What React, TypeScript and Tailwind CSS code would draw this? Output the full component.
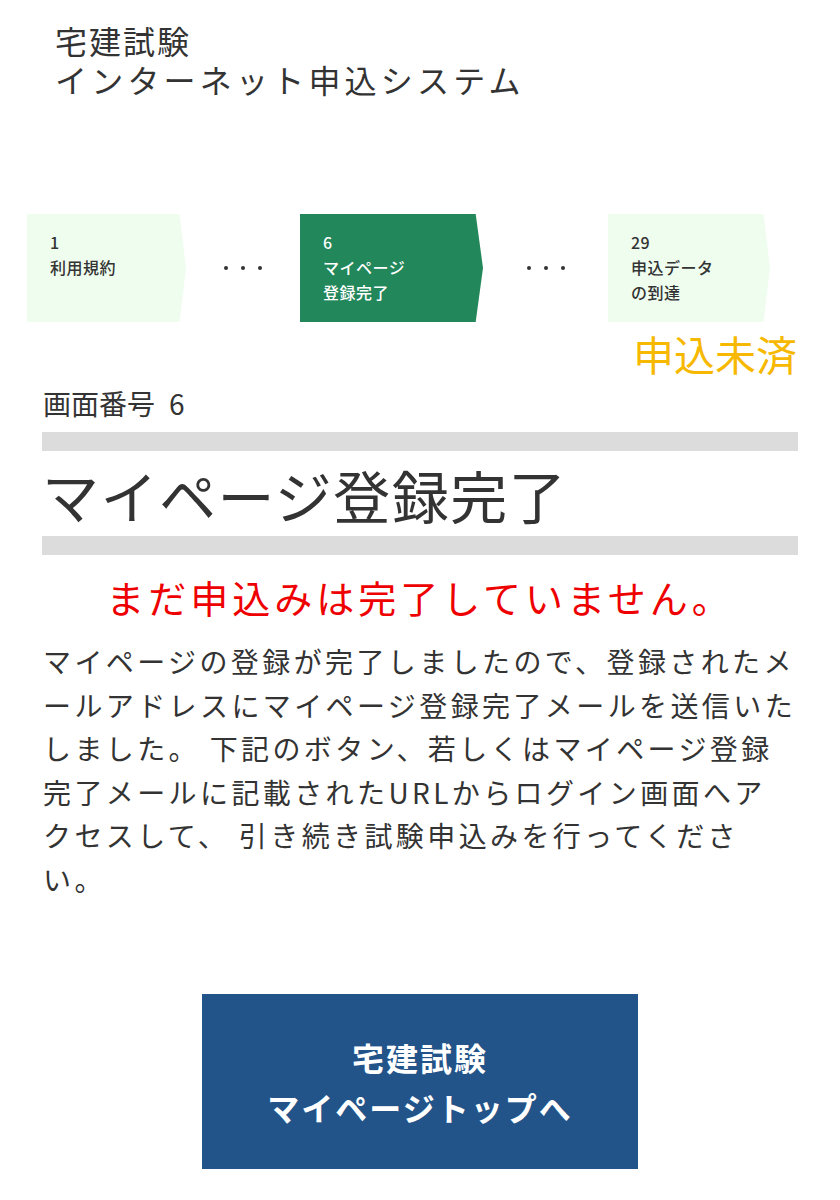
const FONT = { fontFamily: '"Noto Sans CJK JP", "Noto Sans", sans-serif' };

function Step({ no, lines, active, width }: { no: string; lines: string[]; active?: boolean; width: string }) {
  return (
    <div
      className={`${width} h-[108px] pl-[23px] pt-[16px] text-[16px] leading-[25px] tracking-[0.5px] font-medium ${active ? 'bg-[#22875a] text-white' : 'bg-[#effdee] text-[#333]'}`}
      style={{ clipPath: 'polygon(0 0, 96% 0, 100% 50%, 96% 100%, 0 100%)' }}
    >
      <div>{no}</div>
      {lines.map(l => (
        <div key={l}>{l}</div>
      ))}
    </div>
  );
}

function Dots({ width }: { width: string }) {
  return (
    <div className={`${width} flex justify-center gap-[13px]`}>
      <span className="w-[4px] h-[4px] rounded-full bg-[#333]" />
      <span className="w-[4px] h-[4px] rounded-full bg-[#333]" />
      <span className="w-[4px] h-[4px] rounded-full bg-[#333]" />
    </div>
  );
}

export default function App() {
  return (
    <div className="w-[840px] min-h-[1200px] bg-white text-[#333]" style={FONT}>
      <header className="pt-[21px] pl-[55px] text-[32px] leading-[39px]">
        <div className="tracking-[2px]">宅建試験</div>
        <div className="tracking-[4.2px]">インターネット申込システム</div>
      </header>

      <div className="mt-[115px] pl-[27px] flex items-center">
        <Step no="1" lines={['利用規約']} width="w-[159px]" />
        <Dots width="w-[114px]" />
        <Step no="6" lines={['マイページ', '登録完了']} active width="w-[183px]" />
        <Dots width="w-[125px]" />
        <Step no="29" lines={['申込データ', 'の到達']} width="w-[162px]" />
      </div>

      <div className="mt-[8px] pr-[43px] text-right text-[41px] leading-[46px] text-[#f6b800]">申込未済</div>

      <main className="px-[42px]">
        <div className="mt-[10px] pl-[1px] text-[28px] leading-[34px]">
          画面番号<span className="ml-[14px]">6</span>
        </div>
        <div className="mt-[12px] h-[19px] bg-[#dcdcdc]" />
        <h1 className="mt-[11px] text-[57px] leading-[64px] tracking-[1.5px]">マイページ登録完了</h1>
        <div className="mt-[10px] h-[19px] bg-[#dcdcdc]" />
        <p className="mt-[20px] text-center text-[38px] leading-[44px] tracking-[4px] text-[#ee0000]">まだ申込みは完了していません。</p>
        <p className="mt-[21px] pl-[1px] text-[28px] leading-[43.5px] tracking-[3.4px] whitespace-nowrap">
          マイページの登録が完了しましたので、登録されたメ
          <br />
          ールアドレスにマイページ登録完了メールを送信いた
          <br />
          しました。 下記のボタン、若しくはマイページ登録
          <br />
          完了メールに記載されたURLからログイン画面へア
          <br />
          クセスして、 引き続き試験申込みを行ってくださ
          <br />
          い。
        </p>
        <div className="mt-[93px] flex justify-center">
          <button className="w-[436px] h-[175px] bg-[#22548a] text-white text-[32px] leading-[50px] font-bold tracking-[2px]">
            宅建試験
            <br />
            マイページトップへ
          </button>
        </div>
      </main>
    </div>
  );
}
